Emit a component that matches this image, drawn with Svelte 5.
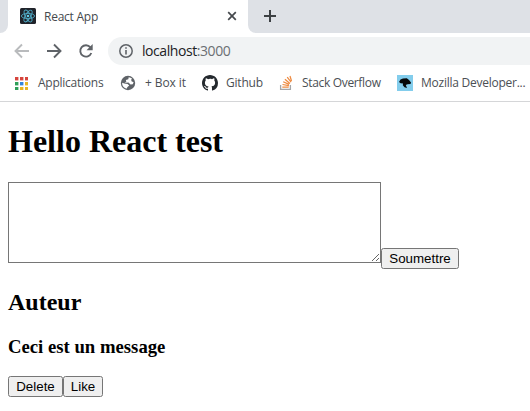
<script>
  const bookmarks = [
    { icon: 'apps', label: 'Applications', width: 105, spacing: -0.25 },
    { icon: 'globe', label: '+ Box it', width: 82, spacing: -0.1 },
    { icon: 'github', label: 'Github', width: 77, spacing: -0.2 },
    { icon: 'stack', label: 'Stack Overflow', width: 118, spacing: -0.33 },
    { icon: 'mdn', label: 'Mozilla Developer...', width: 132, spacing: -0.25 }
  ];
  const dots = ['#d6453d', '#d6453d', '#d6453d', '#2f9e58', '#3484db', '#e9b421', '#2f9e58', '#e9b421', '#e9b421'];
  let message = $state('');
</script>

<div class="window">
  <div class="tabs">
    <div class="edge"></div>
    <div class="tab">
      <svg class="logo" width="16" height="16" viewBox="0 0 16 16">
        <rect width="16" height="16" rx="1.5" fill="#20232a" />
        <g fill="none" stroke="#4fa9c4" stroke-width=".9">
          <ellipse cx="8" cy="8" rx="6.6" ry="2.6" />
          <ellipse cx="8" cy="8" rx="6.6" ry="2.6" transform="rotate(60 8 8)" />
          <ellipse cx="8" cy="8" rx="6.6" ry="2.6" transform="rotate(120 8 8)" />
        </g>
        <circle cx="8" cy="8" r="1.3" fill="#61cce8" />
      </svg>
      <span class="title">React App</span>
      <svg class="close" width="10" height="10" viewBox="0 0 10 10"><path d="M1.2 1.2l7.6 7.6M8.8 1.2L1.2 8.8" stroke="#45494d" stroke-width="1.7" /></svg>
    </div>
    <div class="rest">
      <svg width="12" height="12" viewBox="0 0 12 12"><path d="M6 0v12M0 6h12" stroke="#3c4043" stroke-width="2" /></svg>
    </div>
  </div>

  <div class="toolbar">
    <svg width="16" height="16" viewBox="0 0 16 16" fill="none" stroke="#b9bbbd" stroke-width="1.9"><path d="M15 8H2M8 1.5L1.5 8L8 14.5" /></svg>
    <svg width="16" height="16" viewBox="0 0 16 16" fill="none" stroke="#5f6368" stroke-width="1.9"><path d="M1 8h13M8 1.5L14.500 8L8 14.500" /></svg>
    <svg width="16" height="16" viewBox="0 0 16 16"><path d="M13.300 10A5.700 5.700 0 1 1 12.400 4.300" fill="none" stroke="#5f6368" stroke-width="1.9" /><path d="M14.700 1v6.200H8.500z" fill="#5f6368" /></svg>
    <div class="address">
      <svg width="14" height="14" viewBox="0 0 14 14"><circle cx="7" cy="7" r="6.200" fill="none" stroke="#5f6368" stroke-width="1.5" /><path d="M7 6v4.500M7 3.300v1.500" stroke="#5f6368" stroke-width="1.600" /></svg>
      <span class="url">localhost<i>:3000</i></span>
    </div>
  </div>

  <nav>
    {#each bookmarks as b}
      <div class="bookmark" style:width="{b.width}px" style:letter-spacing="{b.spacing}px">
        <span class="icon {b.icon}">
          {#if b.icon === 'apps'}
            <svg width="13" height="13" viewBox="0 0 13 13">
              {#each dots as color, i}
                <rect x={(i % 3) * 5} y={Math.floor(i / 3) * 5} width="3.4" height="3.4" fill={color} />
              {/each}
            </svg>
          {:else if b.icon === 'globe'}
            <svg width="16" height="16" viewBox="0 0 16 16">
              <circle cx="8" cy="8" r="7.200" fill="#5f6368" />
              <path d="M8.700 2.300L8.300 4.300L5.900 5L6.300 6.800L4.600 7.700L8.500 7.500L10.500 9.500L12.800 9.200L13.600 7.200L11.500 6.300L11.200 4.600L12.200 3.800A6 6 0 0 0 8.700 2.300zM2.100 7.800A6 6 0 0 0 6.500 13.700L7.500 12L9.200 10.500L7.600 9L4.400 8.500z" fill="#fff" />
            </svg>
          {:else if b.icon === 'github'}
            <svg width="16" height="16" viewBox="0 0 16 16"><path fill="#24292e" d="M8 0C3.580 0 0 3.580 0 8c0 3.540 2.290 6.530 5.470 7.590.4.070.55-.17.55-.38 0-.19-.01-.82-.01-1.490-2.010.37-2.530-.49-2.690-.94-.09-.23-.48-.94-.82-1.130-.28-.15-.68-.52-.01-.53.63-.01 1.080.58 1.230.82.72 1.210 1.870.87 2.330.66.07-.52.28-.87.51-1.070-1.780-.2-3.640-.89-3.640-3.950 0-.87.31-1.590.82-2.150-.08-.2-.36-1.020.08-2.120 0 0 .67-.21 2.200.82A7.700 7.700 0 0 1 8 3.860c.68 0 1.360.09 2 .27 1.530-1.040 2.200-.82 2.200-.82.44 1.100.16 1.920.08 2.120.51.56.82 1.270.82 2.150 0 3.070-1.870 3.750-3.650 3.950.29.25.54.73.54 1.480 0 1.070-.01 1.930-.01 2.200 0 .21.15.46.55.38A8 8 0 0 0 16 8c0-4.420-3.580-8-8-8z" /></svg>
          {:else if b.icon === 'stack'}
            <svg width="16" height="16" viewBox="0 0 16 16" fill="none">
              <path d="M1.600 10v4.300h9.800V10" stroke="#a5a6a8" stroke-width="1.300" />
              <path d="M3.300 12.200h6.400M3.500 9.500l6.400 1.200M4.200 6.700l5.900 2.700M5.900 4.200l5 4.200M8.200 2l3.900 5.200M11 1l1.500 5" stroke="#ee8b42" stroke-width="1.250" />
            </svg>
          {:else}
            <svg width="16" height="16" viewBox="0 0 16 16"><path fill="#83cdec" d="M0 0h16v16H0z" /><path d="M2 7L3.500 4.600L6 3.400L9.800 3.200L12 5L14 7.500L13.500 9L10.500 9.200L8.800 10.100L10 13L7.500 12.300L5.800 10.200L6 8.400L3.600 8.300z" fill="#050809" /></svg>
          {/if}
        </span>
        <span>{b.label}</span>
      </div>
    {/each}
  </nav>

  <main>
    <h1>Hello React test</h1>
    <form onsubmit={(e) => e.preventDefault()}>
      <textarea bind:value={message} aria-label="Message"></textarea><button class="submit">Soumettre</button>
    </form>
    <h2>Auteur</h2>
    <h3>Ceci est un message</h3>
    <div class="actions"><button class="delete">Delete</button><button class="like">Like</button></div>
  </main>
</div>

<style>
  :global(body) { margin: 0; background: #fff; }
  .window { width: 530px; height: 411px; overflow: hidden; background: #fff; box-sizing: border-box; }
  svg { display: block; flex: none; }
  .tabs { display: flex; height: 33px; background: #fff; font: 12px "Open Sans", sans-serif; color: #45494d; }
  .edge { width: 8px; background: #dee1e6; border-bottom-right-radius: 8px; }
  .tab { width: 240px; height: 33px; box-sizing: border-box; display: flex; align-items: center; padding-left: 12px; background: #fff; border-radius: 8px 8px 0 0; }
  .title { margin-left: 8px; width: 183px; letter-spacing: -0.25px; line-height: 32px; }
  .logo, .close { margin-top: -1px; }
  .rest { flex: 1; background: #dee1e6; border-bottom-left-radius: 8px; padding: 10px 0 0 16px; }
  .toolbar { display: flex; height: 36px; align-items: center; gap: 16px; padding-left: 14px; }
  .address { flex: 1; height: 28px; display: flex; align-items: center; background: #f1f3f4; border-radius: 14px 0 0 14px; padding-left: 11px; margin-left: -2px; box-sizing: border-box; }
  .url { margin-left: 9px; font: 14px/28px "Open Sans", sans-serif; letter-spacing: -0.43px; color: #202124; }
  .url i { color: #6b6f73; font-style: normal; }
  nav { display: flex; box-sizing: border-box; height: 33px; padding-left: 15px; border-bottom: 1px solid #d5d6d8; font: 12px/28px "Open Sans", sans-serif; color: #4b4f54; }
  .bookmark { flex: none; display: flex; align-items: center; height: 28px; white-space: nowrap; }
  .icon { width: 16px; margin-right: 8px; }
  .apps { margin-right: 7px; }
  .globe { margin-right: 9px; }
  .stack { margin-right: 7px; }
  main { padding: 0 8px; font-family: "Liberation Serif", serif; color: #000; }
  h1 { font-size: 32px; line-height: 37px; margin: 21px 0 22px; }
  form { display: flex; align-items: flex-start; }
  textarea { width: 373px; height: 81px; box-sizing: border-box; border: 1px solid #767676; margin: 0; padding: 2px; background: #fff; border-radius: 0; outline: none; }
  button { box-sizing: border-box; height: 21px; padding: 0; border: 1px solid #767676; border-radius: 2.500px; background: #efefef; color: #000; font: 13.333px/17px "Liberation Sans", sans-serif; margin: 0; }
  .submit { width: 78px; margin-top: 66px; }
  h2 { font-size: 24px; line-height: 27px; margin: 20px 0 20px; }
  h3 { font-size: 18.720px; line-height: 22px; margin: 0 0 18px; }
  .actions { display: flex; }
  .delete { width: 55px; }
  .like { width: 40px; }
</style>
